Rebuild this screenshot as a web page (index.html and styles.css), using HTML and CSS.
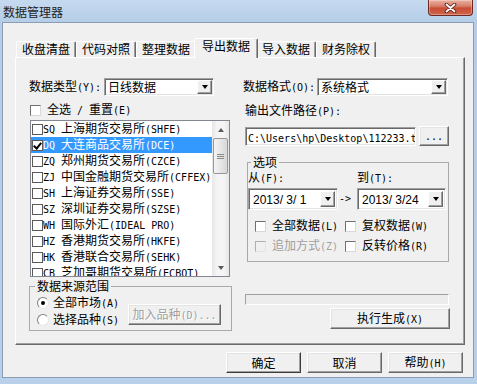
FILE: index.html
```html
<!DOCTYPE html>
<html lang="zh-CN">
<head>
    <meta charset="UTF-8">
    <meta name="viewport" content="width=device-width, initial-scale=1.0">
    <title>数据管理器</title>
    <link rel="stylesheet" href="styles.css">
</head>
<body>
    <div class="window">
        <div class="titlebar">
            <span class="title">数据管理器</span>
            <button class="close-btn" aria-label="关闭">
                <svg width="13" height="10" viewBox="0 0 13 10">
                    <path d="M2.5 1.5l8 7M10.5 1.5l-8 7" stroke="#5a2018" stroke-width="3.6" stroke-linecap="round"/>
                    <path d="M2.5 1.5l8 7M10.5 1.5l-8 7" stroke="#fff" stroke-width="1.8" stroke-linecap="round"/>
                </svg>
            </button>
        </div>

        <div class="client">
            <!-- Tab strip -->
            <ul class="tabs">
                <li class="tab">收盘清盘</li>
                <li class="tab">代码对照</li>
                <li class="tab">整理数据</li>
                <li class="tab active">导出数据</li>
                <li class="tab">导入数据</li>
                <li class="tab">财务除权</li>
            </ul>

            <div class="panel">
                <!-- Left column: market list -->
                <div class="col col-left">
                    <div class="field-row">
                        <span class="field-label">数据类型<span class="en">(Y):</span></span>
                        <div class="combo combo-type">
                            <span class="combo-text">日线数据</span>
                            <span class="drop-btn"></span>
                        </div>
                    </div>

                    <div class="check-row select-all">
                        <span class="box"></span>
                        <span>全选<span class="en"> / </span>重置<span class="en">(E)</span></span>
                    </div>

                    <div class="listbox">
                        <ul class="list-items">
                            <li class="item"><span class="box small"></span><span><span class="en">SQ </span>上海期货交易所<span class="en">(SHFE)</span></span></li>
                            <li class="item selected"><span class="box small checked"></span><span><span class="en">DQ </span>大连商品交易所<span class="en">(DCE)</span></span></li>
                            <li class="item"><span class="box small"></span><span><span class="en">ZQ </span>郑州期货交易所<span class="en">(CZCE)</span></span></li>
                            <li class="item"><span class="box small"></span><span><span class="en">ZJ </span>中国金融期货交易所<span class="en">(CFFEX)</span></span></li>
                            <li class="item"><span class="box small"></span><span><span class="en">SH </span>上海证券交易所<span class="en">(SSE)</span></span></li>
                            <li class="item"><span class="box small"></span><span><span class="en">SZ </span>深圳证券交易所<span class="en">(SZSE)</span></span></li>
                            <li class="item"><span class="box small"></span><span><span class="en">WH </span>国际外汇<span class="en">(IDEAL PRO)</span></span></li>
                            <li class="item"><span class="box small"></span><span><span class="en">HZ </span>香港期货交易所<span class="en">(HKFE)</span></span></li>
                            <li class="item"><span class="box small"></span><span><span class="en">HK </span>香港联合交易所<span class="en">(SEHK)</span></span></li>
                            <li class="item"><span class="box small"></span><span><span class="en">CB </span>芝加哥期货交易所<span class="en">(ECBOT)</span></span></li>
                        </ul>
                        <div class="scrollbar">
                            <span class="sb-arrow up"></span>
                            <span class="sb-thumb"><i></i><i></i><i></i></span>
                            <span class="sb-track"></span>
                            <span class="sb-arrow down"></span>
                        </div>
                    </div>

                    <fieldset class="group source-group">
                        <legend>数据来源范围</legend>
                        <div class="source-body">
                            <div class="radios">
                                <div class="radio-row"><span class="radio checked"></span><span>全部市场<span class="en">(A)</span></span></div>
                                <div class="radio-row"><span class="radio"></span><span>选择品种<span class="en">(S)</span></span></div>
                            </div>
                            <button class="btn add-btn" disabled>加入品种<span class="en">(D)...</span></button>
                        </div>
                    </fieldset>
                </div>

                <!-- Right column: export options -->
                <div class="col col-right">
                    <div class="field-row">
                        <span class="field-label wide">数据格式<span class="en">(O):</span></span>
                        <div class="combo combo-format">
                            <span class="combo-text">系统格式</span>
                            <span class="drop-btn"></span>
                        </div>
                    </div>

                    <div class="path-label">输出文件路径<span class="en">(P):</span></div>
                    <div class="path-row">
                        <div class="path-field"><span class="en">C:\Users\hp\Desktop\112233.txt</span></div>
                        <button class="btn browse-btn"><span class="en">...</span></button>
                    </div>

                    <fieldset class="group options-group">
                        <legend>选项</legend>
                        <div class="date-labels">
                            <span>从<span class="en">(F):</span></span>
                            <span></span>
                            <span>到<span class="en">(T):</span></span>
                        </div>
                        <div class="date-row">
                            <div class="date-field"><span class="date-text">2013/ 3/ 1</span><span class="drop-btn"></span></div>
                            <span class="arrow en">-&gt;</span>
                            <div class="date-field"><span class="date-text">2013/ 3/24</span><span class="drop-btn"></span></div>
                        </div>
                        <div class="option-grid">
                            <div class="check-row"><span class="box"></span><span>全部数据<span class="en">(L)</span></span></div>
                            <div class="check-row"><span class="box"></span><span>复权数据<span class="en">(W)</span></span></div>
                            <div class="check-row disabled"><span class="box"></span><span>追加方式<span class="en">(Z)</span></span></div>
                            <div class="check-row"><span class="box"></span><span>反转价格<span class="en">(R)</span></span></div>
                        </div>
                    </fieldset>

                    <div class="progress"></div>
                    <button class="btn run-btn">执行生成<span class="en">(X)</span></button>
                </div>
            </div>

            <div class="actions">
                <button class="btn default">确定</button>
                <button class="btn">取消</button>
                <button class="btn">帮助<span class="en">(H)</span></button>
            </div>
        </div>
    </div>
</body>
</html>
```

FILE: styles.css
```css
/* General Reset */
* {
    margin: 0;
    padding: 0;
    box-sizing: border-box;
}

body {
    font-family: "Noto Sans CJK SC", sans-serif;
    font-size: 12px;
    line-height: 14px;
    color: #000;
    background-color: #b9d1ea;
}

ul {
    list-style: none;
}

/* half-width latin, like the old bitmap font */
.en {
    font-family: "DejaVu Sans Mono", monospace;
    font-size: 10px;
    white-space: pre;
}

/* Window frame */
.window {
    width: 477px;
    height: 384px;
    padding: 0 3px 0 2px;
    background: linear-gradient(180deg, #c6daef 0%, #b5cde8 22px, #b9d0ea 100%);
}

.titlebar {
    height: 22px;
    display: flex;
    justify-content: space-between;
    align-items: flex-start;
}

.title {
    margin: 5px 0 0 1px;
    font-size: 12px;
    line-height: 14px;
    color: #1e1e1e;
}

.close-btn {
    width: 45px;
    height: 16px;
    margin-right: 1px;
    display: flex;
    align-items: center;
    justify-content: center;
    border: 1px solid #6e2a20;
    border-top: none;
    border-radius: 0 0 4px 4px;
    background: linear-gradient(180deg, #eab0a2 0%, #d8806b 40%, #c74d34 55%, #d0674d 100%);
    box-shadow: inset 0 0 0 1px rgba(255, 255, 255, 0.3);
}

.client {
    width: 472px;
    height: 356px;
    padding-top: 15px;
    border: 1px solid #8c9db3;
    background-color: #f0f0f0;
}

/* Tabs */
.tabs {
    display: flex;
    align-items: flex-end;
    height: 19px;
    margin-left: 13px;
}

.tab {
    height: 16px;
    padding: 0 5px;
    border-top: 1px solid #fff;
    border-left: 1px solid #fff;
    border-right: 1px solid #696969;
    border-radius: 2px 2px 0 0;
    box-shadow: inset -1px 0 #a0a0a0;
    white-space: nowrap;
}

.tab.active {
    position: relative;
    z-index: 1;
    height: 20px;
    margin: 0 -2px -1px;
    padding: 0 7px;
    background-color: #f0f0f0;
}

.panel {
    width: 450px;
    height: 288px;
    margin-left: 12px;
    padding: 20px 0 0 13px;
    border: 1px solid;
    border-color: #fff #696969 #696969 #fff;
    box-shadow: inset -1px -1px #a0a0a0;
    display: grid;
    grid-template-columns: 202px 207px;
    column-gap: 12px;
    align-items: start;
}

/* Shared controls */
.field-row {
    display: flex;
    align-items: center;
    height: 18px;
}

.field-label {
    width: 75px;
    white-space: nowrap;
}

.field-label.wide {
    width: 74px;
}

.combo,
.date-field,
.path-field {
    background-color: #fff;
    border: 1px solid;
    border-color: #a0a0a0 #fff #fff #a0a0a0;
    box-shadow: inset 1px 1px #696969, inset -1px -1px #e3e3e3;
}

.combo {
    height: 18px;
    padding: 1px;
    display: flex;
}

.combo-type {
    width: 110px;
}

.combo-format {
    width: 131px;
}

.combo-text {
    flex: 1;
    padding-left: 2px;
    line-height: 14px;
}

.drop-btn {
    width: 15px;
    display: flex;
    align-items: center;
    justify-content: center;
    background-color: #f0f0f0;
    border: 1px solid;
    border-color: #fff #696969 #696969 #fff;
    box-shadow: inset -1px -1px #a0a0a0;
}

.drop-btn::after {
    content: "";
    border-style: solid;
    border-width: 4px 3.5px 0;
    border-color: #000 transparent transparent;
}

.btn {
    height: 21px;
    font: inherit;
    color: #000;
    background-color: #f0f0f0;
    border: 1px solid;
    border-color: #fff #696969 #696969 #fff;
    box-shadow: inset -1px -1px #a0a0a0, inset 1px 1px #e3e3e3;
}

.btn:disabled {
    color: #a0a0a0;
    text-shadow: 1px 1px 0 #fff;
}

.btn.default {
    border-color: #fff #3c3c3c #3c3c3c #fff;
}

.check-row {
    display: flex;
    align-items: center;
    height: 14px;
    gap: 6px;
    white-space: nowrap;
}

.check-row.disabled {
    color: #a0a0a0;
}

.box {
    width: 11px;
    height: 11px;
    flex-shrink: 0;
    background-color: #fff;
    border: 1px solid;
    border-color: #707070 #d8d8d8 #d8d8d8 #707070;
}

.check-row.disabled .box {
    background-color: #f0f0f0;
    border-color: #b0b0b0 #e4e4e4 #e4e4e4 #b0b0b0;
}

.box.small {
    border: 1px solid #5a5a5a;
    position: relative;
}

.box.checked::after {
    content: "";
    position: absolute;
    left: 2px;
    top: 0;
    width: 3px;
    height: 6px;
    border-right: 2px solid #000;
    border-bottom: 2px solid #000;
    transform: rotate(40deg);
}

.radio {
    width: 12px;
    height: 12px;
    flex-shrink: 0;
    border-radius: 50%;
    background-color: #fff;
    border: 1px solid;
    border-color: #808080 #e6e6e6 #e6e6e6 #808080;
    display: flex;
    align-items: center;
    justify-content: center;
}

.radio.checked::after {
    content: "";
    width: 4px;
    height: 4px;
    border-radius: 50%;
    background-color: #000;
}

.group {
    min-inline-size: 0;
    border: 1px solid #a9a9a9;
}

.group legend {
    margin-left: 5px;
    padding: 0 2px;
    line-height: 14px;
}

/* Left column */
.select-all {
    margin: 7px 0 0 1px;
}

.listbox {
    width: 200px;
    height: 157px;
    margin: 3px 0 0 1px;
    border: 1px solid #828790;
    background-color: #fff;
    display: flex;
}

.list-items {
    flex: 1;
    overflow: hidden;
}

.item {
    height: 16px;
    padding-left: 1px;
    display: flex;
    align-items: center;
    white-space: nowrap;
}

.item.selected {
    background-color: #3399ff;
    color: #fff;
}

.scrollbar {
    width: 17px;
    display: flex;
    flex-direction: column;
    background: linear-gradient(90deg, #e6e6e6, #f5f5f5 30%, #f5f5f5 70%, #e6e6e6);
}

.sb-arrow {
    height: 17px;
    display: flex;
    align-items: center;
    justify-content: center;
}

.sb-arrow::after {
    content: "";
    border-style: solid;
    border-width: 0 3.5px 4px;
    border-color: transparent transparent #5c5c5c;
}

.sb-arrow.down::after {
    border-width: 4px 3.5px 0;
    border-color: #5c5c5c transparent transparent;
}

.sb-thumb {
    height: 36px;
    margin: 0 1px;
    border: 1px solid #979797;
    border-radius: 2px;
    background: linear-gradient(90deg, #f4f4f4, #e6e6e6 50%, #d8d8d8);
    display: flex;
    flex-direction: column;
    align-items: center;
    justify-content: center;
    gap: 1px;
}

.sb-thumb i {
    width: 7px;
    height: 1px;
    background-color: #8a8a8a;
}

.sb-track {
    flex: 1;
}

.source-group {
    width: 203px;
    margin-top: 2px;
}

.source-body {
    display: flex;
    padding: 3px 0 3px 7px;
}

.radios {
    width: 91px;
    display: flex;
    flex-direction: column;
    gap: 3px;
}

.radio-row {
    display: flex;
    align-items: center;
    gap: 4px;
    height: 14px;
    white-space: nowrap;
}

.add-btn {
    width: 93px;
    margin-top: 8px;
}

/* Right column */
.path-label {
    margin: 7px 0 0 2px;
}

.path-row {
    display: flex;
    align-items: flex-start;
    gap: 3px;
    margin-top: 7px;
}

.path-field {
    width: 171px;
    height: 19px;
    margin: 1px 0 0 2px;
    padding: 2px 0 0 2px;
    overflow: hidden;
    white-space: nowrap;
    line-height: 14px;
}

.browse-btn {
    width: 30px;
    height: 20px;
}

.options-group {
    width: 202px;
    margin: 9px 0 0 4px;
    padding: 0 0 8px;
}

.options-group legend {
    margin-left: 3px;
}

.date-labels,
.date-row {
    display: grid;
    grid-template-columns: 90px 19px 89px;
}

.date-labels {
    margin-top: 1px;
}

.date-row {
    margin-top: 2px;
    align-items: center;
}

.date-field {
    height: 22px;
    padding: 2px;
    display: flex;
}

.date-text {
    flex: 1;
    padding-left: 2px;
    font-family: "Liberation Sans", sans-serif;
    font-size: 12px;
    line-height: 18px;
    white-space: pre;
}

.arrow {
    padding-left: 1px;
}

.option-grid {
    display: grid;
    grid-template-columns: 90px 100px;
    row-gap: 6px;
    margin: 9px 0 0 7px;
}

.progress {
    width: 204px;
    height: 11px;
    margin: 32px 0 0 2px;
    border: 1px solid;
    border-color: #a0a0a0 #fff #fff #a0a0a0;
    background-color: #ececec;
}

.run-btn {
    display: block;
    width: 120px;
    margin: 3px 0 0 auto;
}

/* Dialog buttons */
.actions {
    display: flex;
    justify-content: flex-end;
    gap: 6px;
    margin-top: 7px;
    padding-right: 10px;
}

.actions .btn {
    width: 75px;
}
```
